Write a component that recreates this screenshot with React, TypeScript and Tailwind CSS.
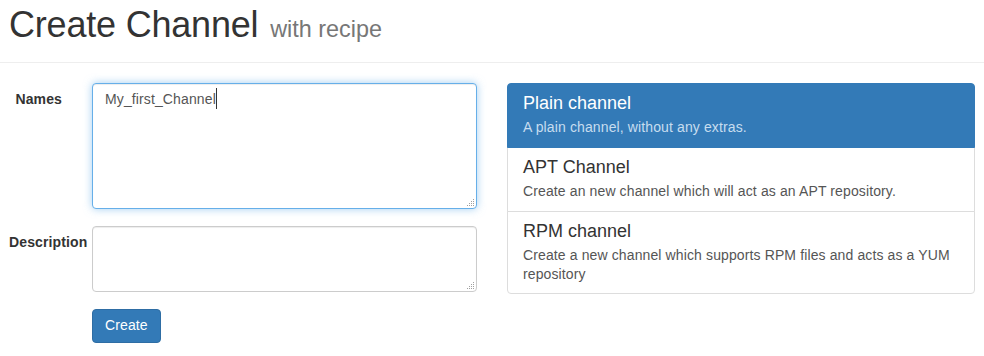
const items = [
  { title: 'Plain channel', text: 'A plain channel, without any extras.', active: true },
  { title: 'APT Channel', text: 'Create an new channel which will act as an APT repository.' },
  { title: 'RPM channel', text: 'Create a new channel which supports RPM files and acts as a YUM repository' },
]

const textareaClass =
  'block w-full resize-none rounded-[4px] border bg-white px-[12px] py-[6px] text-[14px] leading-[1.42857] tracking-[0.12px] text-[#555] outline-none'

function Grip() {
  const dots = [
    [7, 1],
    [5, 3], [7, 3],
    [3, 5], [5, 5], [7, 5],
    [1, 7], [3, 7], [5, 7], [7, 7],
  ]
  return (
    <svg className="pointer-events-none absolute right-[2px] bottom-[2px]" width="9" height="9" viewBox="0 0 9 9">
      {dots.map(([x, y]) => (
        <rect key={`${x}-${y}`} x={x} y={y} width="1" height="1" fill="#a0a0a0" />
      ))}
    </svg>
  )
}

export default function App() {
  return (
    <div className="min-h-[356px] bg-white font-['Liberation_Sans',Arial,sans-serif] text-[14px] leading-[1.42857] tracking-[0.12px] text-[#333]">
      <div className="border-b border-[#eee] px-[9px] pt-[5px] pb-[17px]">
        <h1 className="text-[36px] leading-[1.1] font-normal tracking-[-0.2px]">
          Create Channel <small className="ml-[2px] text-[65%] tracking-normal text-[#777]">with recipe</small>
        </h1>
      </div>

      <div className="mt-[20px] grid grid-cols-[468px_468px] gap-[30px] px-[9px]">
        <form className="flex flex-col" onSubmit={(e) => e.preventDefault()}>
          <div className="mb-[17px] flex gap-[30px]">
            <label className="w-[53px] shrink-0 whitespace-nowrap pt-[7px] text-right font-bold">Names</label>
            <div className="relative flex-1">
              <textarea
                className={`${textareaClass} h-[126px] border-[#66afe9] shadow-[inset_0_1px_1px_rgba(0,0,0,0.075),0_0_8px_rgba(102,175,233,0.6)]`}
                defaultValue="My_first_Channel"
              />
              <span className="absolute top-[5px] left-[124px] h-[21px] w-px bg-[#333]" />
              <Grip />
            </div>
          </div>

          <div className="mb-[17px] flex gap-[30px]">
            <label className="w-[53px] shrink-0 whitespace-nowrap pt-[7px] text-right font-bold">Description</label>
            <div className="relative flex-1">
              <textarea
                className={`${textareaClass} h-[66px] border-[#ccc] shadow-[inset_0_1px_1px_rgba(0,0,0,0.075)]`}
              />
              <Grip />
            </div>
          </div>

          <div className="pl-[83px]">
            <button
              type="submit"
              className="h-[34px] rounded-[4px] border border-[#2e6da4] bg-[#337ab7] px-[12px] text-[14px] text-white"
            >
              Create
            </button>
          </div>
        </form>

        <div className="flex flex-col">
          {items.map((item, i) => (
            <div
              key={item.title}
              className={`border px-[15px] py-[10px] ${i > 0 ? '-mt-px' : ''} ${
                i === 0 ? 'rounded-t-[4px]' : ''
              } ${i === items.length - 1 ? 'rounded-b-[4px]' : ''} ${
                item.active ? 'relative border-[#337ab7] bg-[#337ab7]' : 'border-[#ddd] bg-white'
              }`}
            >
              <h4 className={`mb-[5px] text-[18px] leading-[1.1] tracking-normal ${item.active ? 'text-white' : 'text-[#333]'}`}>
                {item.title}
              </h4>
              <p className={`leading-[1.3] ${item.active ? 'text-[#c7ddef]' : 'text-[#555]'}`}>{item.text}</p>
            </div>
          ))}
        </div>
      </div>
    </div>
  )
}
